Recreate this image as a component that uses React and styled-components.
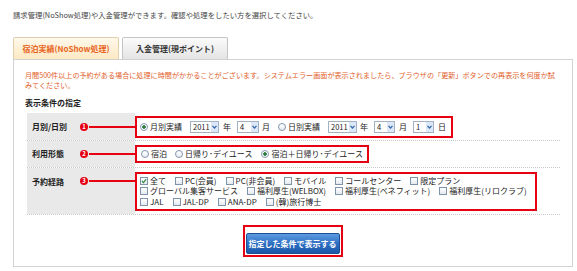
import React from "react";
import styled, { createGlobalStyle } from "styled-components";

const GlobalStyle = createGlobalStyle`
  body {
    margin: 0;
    background: #fff;
    font-family: "Noto Sans CJK JP", "Noto Sans", sans-serif;
    color: #333;
  }
`;

const Page = styled.div`
  padding: 10px 4px 0 13px;
  width: 560px;
`;

const Intro = styled.p`
  margin: 0;
  font-size: 7.35px;
  line-height: 10px;
  color: #444;
  white-space: nowrap;
`;

const Tabs = styled.div`
  display: flex;
  gap: 3px;
  margin-top: 17px;
`;

const Tab = styled.div`
  width: 106px;
  height: 22px;
  box-sizing: border-box;
  display: flex;
  align-items: center;
  justify-content: center;
  font-size: 8px;
  font-weight: bold;
  border: 1px solid ${(p) => (p.active ? "#e2cfae" : "#c4c4c4")};
  border-bottom: none;
  border-radius: 2px 2px 0 0;
  color: ${(p) => (p.active ? "#e8641c" : "#333")};
  background: ${(p) =>
    p.active
      ? "linear-gradient(#fff8ea, #fde9c4)"
      : "linear-gradient(#fbfbfb, #e4e4e4)"};
`;

const Panel = styled.div`
  border: 1px solid #d2d2d2;
  padding: 10px 12px 9px 11px;
`;

const Warning = styled.p`
  margin: 0;
  font-size: 7.12px;
  line-height: 10px;
  color: #e2612a;
  white-space: nowrap;
`;

const SectionTitle = styled.h4`
  margin: 8px 0 0;
  font-size: 8px;
  line-height: 10px;
  font-weight: bold;
  color: #222;
`;

const Table = styled.div`
  margin: 5px 0 0 2px;
  border-bottom: 1px dotted #c8c8c8;
`;

const Row = styled.div`
  display: flex;
  min-height: ${(p) => p.h}px;
  border-top: 1px dotted #c8c8c8;
  &:first-child {
    border-top: none;
  }
`;

const LabelCell = styled.div`
  width: 108px;
  flex: none;
  display: flex;
  align-items: ${(p) => (p.top ? "flex-start" : "center")};
  padding: ${(p) => (p.top ? "9px 0 0 5px" : "0 0 0 5px")};
  box-sizing: border-box;
  background: #e9e9e9;
  font-size: 8px;
  font-weight: bold;
  color: #222;
`;

const LabelText = styled.span`
  width: 48px;
  line-height: 10px;
`;

const Marker = styled.span`
  width: 8px;
  height: 8px;
  border-radius: 50%;
  background: #e60012;
  color: #fff;
  font-size: 6px;
  font-weight: bold;
  line-height: 8px;
  text-align: center;
  flex: none;
`;

const Lead = styled.span`
  flex: 1;
  height: 2px;
  margin-left: 1px;
  background: #e60012;
  align-self: ${(p) => (p.top ? "flex-start" : "center")};
  margin-top: ${(p) => (p.top ? "3px" : "0")};
`;

const ValueCell = styled.div`
  flex: 1;
  display: flex;
  align-items: center;
  padding: 2px 0;
`;

const RedBox = styled.div`
  border: 2px solid #e60012;
  padding: ${(p) => p.pad || "3px 5px 3px 3px"};
  display: flex;
  flex-direction: ${(p) => (p.column ? "column" : "row")};
  align-items: ${(p) => (p.column ? "flex-start" : "center")};
  gap: ${(p) => p.gap || "0"};
  font-size: 8px;
  color: #222;
`;

const Option = styled.label`
  display: inline-flex;
  align-items: center;
  gap: 2px;
  margin-right: ${(p) => p.mr || 0}px;
  white-space: nowrap;
  line-height: 10px;
`;

const Radio = styled.span`
  width: 6px;
  height: 6px;
  border: 1px solid #8395ad;
  border-radius: 50%;
  background: ${(p) =>
    p.checked
      ? "radial-gradient(circle, #2c7a3c 0 1.5px, #fff 2px)"
      : "linear-gradient(#fff, #e8edf3)"};
  flex: none;
`;

const Check = styled.span`
  width: 6px;
  height: 6px;
  border: 1px solid #7f93ab;
  background: linear-gradient(#fff, #e3e9f0);
  flex: none;
  display: flex;
  align-items: center;
  justify-content: center;
`;

const Select = styled.span`
  display: inline-flex;
  align-items: stretch;
  height: 10px;
  border: 1px solid #a3b1c4;
  background: #fff;
  margin-right: ${(p) => p.mr || 0}px;
`;

const SelectValue = styled.span`
  padding: 0 1px 0 2px;
  width: ${(p) => p.w}px;
  font-size: 7.5px;
  line-height: 10px;
  color: #222;
`;

const SelectArrow = styled.span`
  width: 7px;
  background: #dce8f7;
  display: flex;
  align-items: center;
  justify-content: center;
`;

const Unit = styled.span`
  margin-right: ${(p) => p.mr || 0}px;
  line-height: 10px;
`;

const CheckLine = styled.div`
  display: flex;
  gap: 9px;
`;

const Actions = styled.div`
  display: flex;
  justify-content: center;
  margin-top: 10px;
`;

const ButtonFrame = styled.div`
  border: 2px solid #e60012;
  padding: 1px;
`;

const Button = styled.button`
  width: 94px;
  height: 21px;
  border: 1px solid #1b4f92;
  border-radius: 2px;
  background: linear-gradient(#5d9be0, #2a6cc0 55%, #1d58a8);
  color: #fff;
  font-family: inherit;
  font-size: 8px;
  font-weight: bold;
  padding: 0;
`;

const Chevron = () => (
  <svg width="5" height="4" viewBox="0 0 5 4">
    <path d="M0.5 0.8 L2.5 3 L4.5 0.8" fill="none" stroke="#3366aa" strokeWidth="1.2" />
  </svg>
);

const Tick = () => (
  <svg width="6" height="6" viewBox="0 0 6 6">
    <path d="M1 3 L2.5 4.6 L5.2 1.2" fill="none" stroke="#2e8b3e" strokeWidth="1.2" />
  </svg>
);

const Dropdown = ({ value, w, mr }) => (
  <Select mr={mr}>
    <SelectValue w={w}>{value}</SelectValue>
    <SelectArrow>
      <Chevron />
    </SelectArrow>
  </Select>
);

const Box = ({ checked, children }) => (
  <Option>
    <Check>{checked && <Tick />}</Check>
    {children}
  </Option>
);

const routes = [
  [["全て", true], ["PC(会員)"], ["PC(非会員)"], ["モバイル"], ["コールセンター"], ["限定プラン"]],
  [["グローバル集客サービス"], ["福利厚生(WELBOX)"], ["福利厚生(ベネフィット)"], ["福利厚生(リロクラブ)"]],
  [["JAL"], ["JAL-DP"], ["ANA-DP"], ["(韓)旅行博士"]],
];

export default function App() {
  return (
    <>
      <GlobalStyle />
      <Page>
        <Intro>
          請求管理(NoShow処理)や入金管理ができます。確認や処理をしたい方を選択してください。
        </Intro>
        <Tabs>
          <Tab active>宿泊実績(NoShow処理)</Tab>
          <Tab>入金管理(現ポイント)</Tab>
        </Tabs>
        <Panel>
          <Warning>
            月間500件以上の予約がある場合に処理に時間がかかることがございます。システムエラー画面が表示されましたら、ブラウザの「更新」ボタンでの再表示を何度か試
            <br />
            みてください。
          </Warning>
          <SectionTitle>表示条件の指定</SectionTitle>
          <Table>
            <Row h={27}>
              <LabelCell>
                <LabelText>月別/日別</LabelText>
                <Marker>1</Marker>
                <Lead />
              </LabelCell>
              <ValueCell>
                <RedBox>
                  <Option mr={8}>
                    <Radio checked />
                    月別実績
                  </Option>
                  <Dropdown value="2011" w={17} mr={4} />
                  <Unit mr={6}>年</Unit>
                  <Dropdown value="4" w={10} mr={3} />
                  <Unit mr={8}>月</Unit>
                  <Option mr={8}>
                    <Radio />
                    日別実績
                  </Option>
                  <Dropdown value="2011" w={17} mr={3} />
                  <Unit mr={6}>年</Unit>
                  <Dropdown value="4" w={9} mr={4} />
                  <Unit mr={6}>月</Unit>
                  <Dropdown value="1" w={9} mr={4} />
                  <Unit>日</Unit>
                </RedBox>
              </ValueCell>
            </Row>
            <Row h={26}>
              <LabelCell>
                <LabelText>利用形態</LabelText>
                <Marker>2</Marker>
                <Lead />
              </LabelCell>
              <ValueCell>
                <RedBox pad="2px 4px 2px 4px">
                  <Option mr={8}>
                    <Radio />
                    宿泊
                  </Option>
                  <Option mr={9}>
                    <Radio />
                    日帰り･デイユース
                  </Option>
                  <Option>
                    <Radio checked />
                    宿泊＋日帰り･デイユース
                  </Option>
                </RedBox>
              </ValueCell>
            </Row>
            <Row h={46}>
              <LabelCell top>
                <LabelText>予約経路</LabelText>
                <Marker>3</Marker>
                <Lead top />
              </LabelCell>
              <ValueCell>
                <RedBox column pad="2px 8px 2px 3px" gap="0.5px">
                  {routes.map((line, i) => (
                    <CheckLine key={i}>
                      {line.map(([name, checked]) => (
                        <Box key={name} checked={checked}>
                          {name}
                        </Box>
                      ))}
                    </CheckLine>
                  ))}
                </RedBox>
              </ValueCell>
            </Row>
          </Table>
          <Actions>
            <ButtonFrame>
              <Button>指定した条件で表示する</Button>
            </ButtonFrame>
          </Actions>
        </Panel>
      </Page>
    </>
  );
}
